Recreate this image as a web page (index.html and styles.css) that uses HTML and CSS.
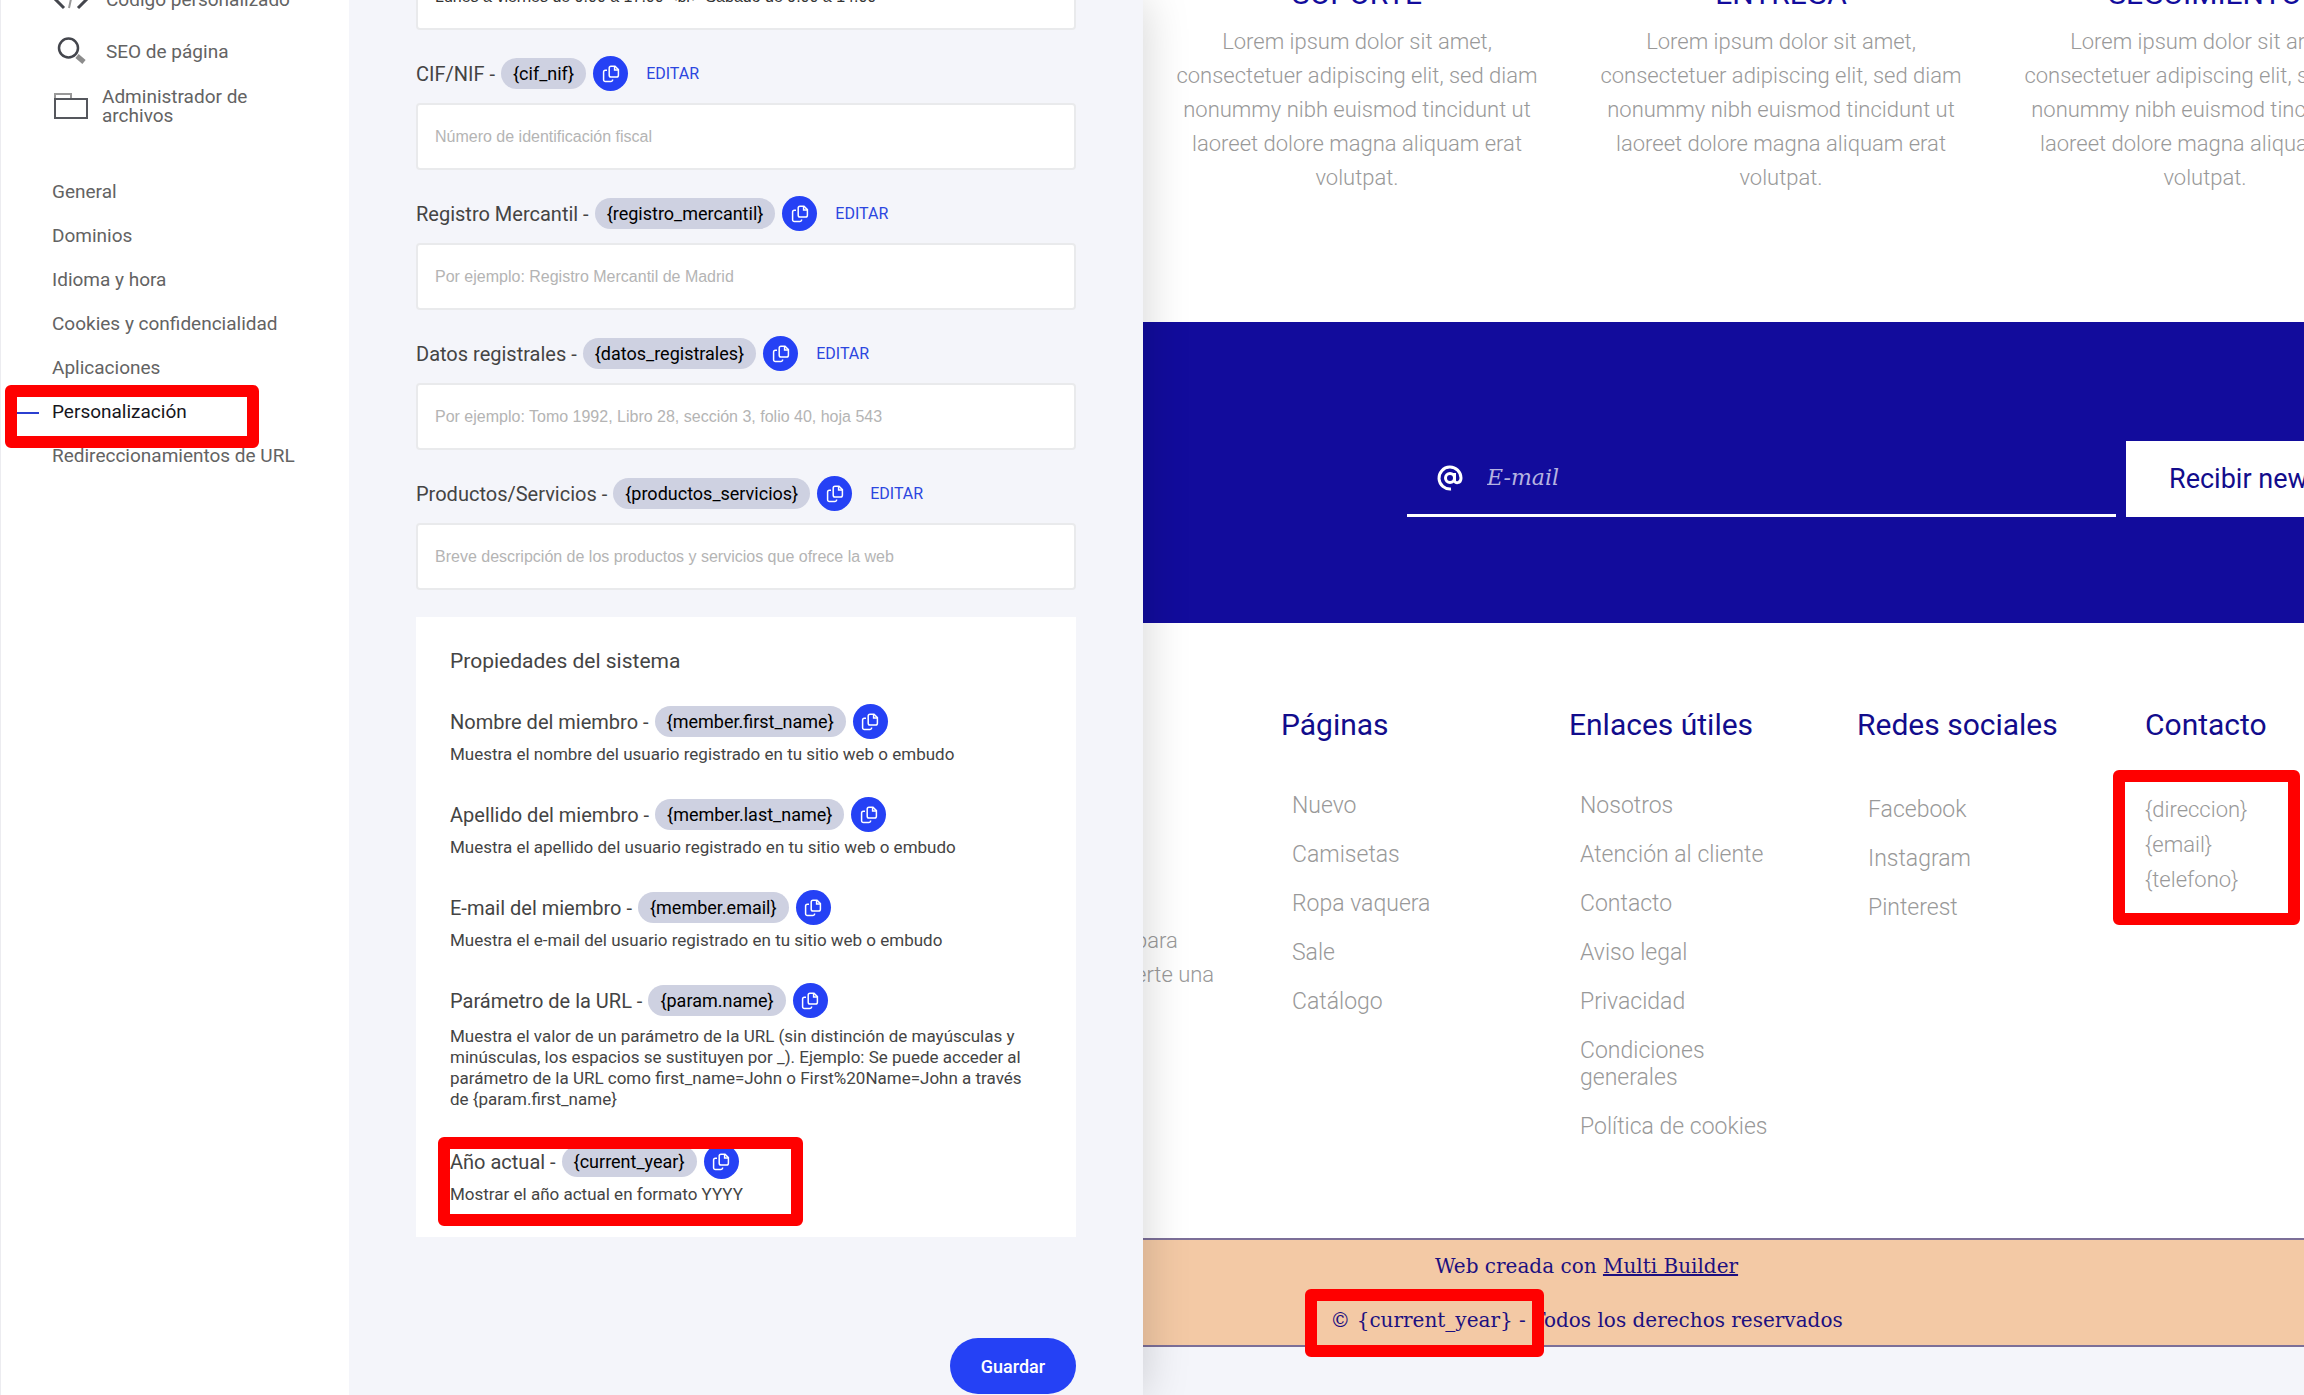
FILE: index.html
```html
<!DOCTYPE html>
<html lang="es">
<head>
  <meta charset="UTF-8" />
  <title>Personalización - Multi Builder</title>
  <link rel="stylesheet" href="styles.css">
</head>
<body>
  <svg class="sprite" aria-hidden="true">
    <symbol id="icon-copy" viewBox="0 0 18 18">
      <path d="M9 1.2h4l3.4 3.4v5.6a1.8 1.8 0 0 1-1.8 1.8H9a1.8 1.8 0 0 1-1.8-1.8V3A1.8 1.8 0 0 1 9 1.2z" />
      <path d="M12.6 1.4v3.6h3.6" />
      <path d="M5 5.2H3.4A1.8 1.8 0 0 0 1.6 7v7.8a1.8 1.8 0 0 0 1.8 1.8h5.4a1.8 1.8 0 0 0 1.8-1.8v-.4" />
    </symbol>
  </svg>

  <div class="app">
    <aside class="sidebar">
      <ul class="tools">
        <li><a href="#">
          <span class="tool-icon"><svg width="36" height="24" viewBox="0 0 36 24" fill="none" stroke-width="3"><path d="M11 3L2 12l9 9M25 3l9 9-9 9" stroke="#44464d" /><path d="M20 3l-4 18" stroke="#999" stroke-width="2" /></svg></span>
          Código personalizado
        </a></li>
        <li><a href="#">
          <span class="tool-icon"><svg width="30" height="28" viewBox="0 0 30 28" fill="none"><circle cx="12.5" cy="11" r="9.5" stroke="#44464d" stroke-width="2.5" /><path d="M21 19l7 6" stroke="#8c8c8c" stroke-width="5" /></svg></span>
          SEO de página
        </a></li>
        <li><a href="#" class="two-lines">
          <span class="tool-icon"><svg width="34" height="28" viewBox="0 0 34 28" fill="none" stroke-width="2"><path d="M1 7V2h16v5" stroke="#999" /><rect x="1" y="7" width="32" height="19" stroke="#55575d" /></svg></span>
          Administrador de archivos
        </a></li>
      </ul>
      <nav class="settings-nav">
        <a href="#">General</a>
        <a href="#">Dominios</a>
        <a href="#">Idioma y hora</a>
        <a href="#">Cookies y confidencialidad</a>
        <a href="#">Aplicaciones</a>
        <a href="#" class="active">Personalización<span class="mark mark-nav"></span></a>
        <a href="#">Redireccionamientos de URL</a>
      </nav>
    </aside>

    <main class="panel">
      <form class="panel-content">
        <input class="field-input" type="text" aria-label="Horario" value="Lunes a viernes de 9:00 a 17:00 &lt;br&gt; Sábado de 9:00 a 14:00" />

        <div class="field-head">
          <label for="cif">CIF/NIF -</label>
          <span class="tag">{cif_nif}</span>
          <button type="button" class="copy-btn" aria-label="Copiar"><svg><use href="#icon-copy" /></svg></button>
          <a href="#" class="edit">EDITAR</a>
        </div>
        <input class="field-input" type="text" id="cif" placeholder="Número de identificación fiscal" />

        <div class="field-head">
          <label for="registro">Registro Mercantil -</label>
          <span class="tag">{registro_mercantil}</span>
          <button type="button" class="copy-btn" aria-label="Copiar"><svg><use href="#icon-copy" /></svg></button>
          <a href="#" class="edit">EDITAR</a>
        </div>
        <input class="field-input" type="text" id="registro" placeholder="Por ejemplo: Registro Mercantil de Madrid" />

        <div class="field-head">
          <label for="datos">Datos registrales -</label>
          <span class="tag">{datos_registrales}</span>
          <button type="button" class="copy-btn" aria-label="Copiar"><svg><use href="#icon-copy" /></svg></button>
          <a href="#" class="edit">EDITAR</a>
        </div>
        <input class="field-input" type="text" id="datos" placeholder="Por ejemplo: Tomo 1992, Libro 28, sección 3, folio 40, hoja 543" />

        <div class="field-head">
          <label for="productos">Productos/Servicios -</label>
          <span class="tag">{productos_servicios}</span>
          <button type="button" class="copy-btn" aria-label="Copiar"><svg><use href="#icon-copy" /></svg></button>
          <a href="#" class="edit">EDITAR</a>
        </div>
        <input class="field-input" type="text" id="productos" placeholder="Breve descripción de los productos y servicios que ofrece la web" />

        <section class="card">
          <h2>Propiedades del sistema</h2>
          <div class="property">
            <div class="property-head">
              <span>Nombre del miembro -</span>
              <span class="tag">{member.first_name}</span>
              <button type="button" class="copy-btn" aria-label="Copiar"><svg><use href="#icon-copy" /></svg></button>
            </div>
            <p>Muestra el nombre del usuario registrado en tu sitio web o embudo</p>
          </div>
          <div class="property">
            <div class="property-head">
              <span>Apellido del miembro -</span>
              <span class="tag">{member.last_name}</span>
              <button type="button" class="copy-btn" aria-label="Copiar"><svg><use href="#icon-copy" /></svg></button>
            </div>
            <p>Muestra el apellido del usuario registrado en tu sitio web o embudo</p>
          </div>
          <div class="property">
            <div class="property-head">
              <span>E-mail del miembro -</span>
              <span class="tag">{member.email}</span>
              <button type="button" class="copy-btn" aria-label="Copiar"><svg><use href="#icon-copy" /></svg></button>
            </div>
            <p>Muestra el e-mail del usuario registrado en tu sitio web o embudo</p>
          </div>
          <div class="property">
            <div class="property-head">
              <span>Parámetro de la URL -</span>
              <span class="tag">{param.name}</span>
              <button type="button" class="copy-btn" aria-label="Copiar"><svg><use href="#icon-copy" /></svg></button>
            </div>
            <p class="long">Muestra el valor de un parámetro de la URL (sin distinción de mayúsculas y minúsculas, los espacios se sustituyen por _). Ejemplo: Se puede acceder al parámetro de la URL como first_name=John o First%20Name=John a través de {param.first_name}</p>
          </div>
          <div class="property">
            <div class="property-head">
              <span>Año actual -</span>
              <span class="tag">{current_year}</span>
              <button type="button" class="copy-btn" aria-label="Copiar"><svg><use href="#icon-copy" /></svg></button>
            </div>
            <p>Mostrar el año actual en formato YYYY</p>
            <span class="mark mark-year"></span>
          </div>
        </section>

        <button type="submit" class="save-btn">Guardar</button>
      </form>
    </main>

    <div class="preview">
      <section class="features">
        <div class="feature">
          <h3>SOPORTE</h3>
          <p>Lorem ipsum dolor sit amet, consectetuer adipiscing elit, sed diam nonummy nibh euismod tincidunt ut laoreet dolore magna aliquam erat volutpat.</p>
        </div>
        <div class="feature">
          <h3>ENTREGA</h3>
          <p>Lorem ipsum dolor sit amet, consectetuer adipiscing elit, sed diam nonummy nibh euismod tincidunt ut laoreet dolore magna aliquam erat volutpat.</p>
        </div>
        <div class="feature">
          <h3>SEGUIMIENTO</h3>
          <p>Lorem ipsum dolor sit amet, consectetuer adipiscing elit, sed diam nonummy nibh euismod tincidunt ut laoreet dolore magna aliquam erat volutpat.</p>
        </div>
      </section>

      <form class="newsletter">
        <div class="email-box">
          <svg width="26" height="26" viewBox="0 0 26 26" fill="none" stroke="#fff" stroke-width="3"><circle cx="13" cy="13" r="4.5" /><path d="M17.5 8v7.5c0 3 6.5 3.5 6.5-2.5A11 11 0 1 0 14 24" /></svg>
          <input type="email" placeholder="E-mail" aria-label="E-mail" />
        </div>
        <button type="button" class="newsletter-btn">Recibir newsletter</button>
      </form>

      <footer class="site-footer">
        <p class="about">para<br>erte una</p>
        <div class="footer-col">
          <h4>Páginas</h4>
          <ul>
            <li><a href="#">Nuevo</a></li>
            <li><a href="#">Camisetas</a></li>
            <li><a href="#">Ropa vaquera</a></li>
            <li><a href="#">Sale</a></li>
            <li><a href="#">Catálogo</a></li>
          </ul>
        </div>
        <div class="footer-col">
          <h4>Enlaces útiles</h4>
          <ul>
            <li><a href="#">Nosotros</a></li>
            <li><a href="#">Atención al cliente</a></li>
            <li><a href="#">Contacto</a></li>
            <li><a href="#">Aviso legal</a></li>
            <li><a href="#">Privacidad</a></li>
            <li><a href="#">Condiciones generales</a></li>
            <li><a href="#">Política de cookies</a></li>
          </ul>
        </div>
        <div class="footer-col">
          <h4>Redes sociales</h4>
          <ul class="social">
            <li><a href="#">Facebook</a></li>
            <li><a href="#">Instagram</a></li>
            <li><a href="#">Pinterest</a></li>
          </ul>
        </div>
        <div class="footer-col">
          <h4>Contacto</h4>
          <p class="contact">{direccion}<br>{email}<br>{telefono}</p>
          <span class="mark mark-contact"></span>
        </div>
      </footer>

      <div class="copyright">
        <p>Web creada con <a href="#">Multi Builder</a></p>
        <p><span class="year">© {current_year} -<span class="mark mark-copy"></span></span> Todos los derechos reservados</p>
      </div>
    </div>
  </div>
</body>
</html>
```
FILE: styles.css
```css
* {
  box-sizing: border-box;
}
body {
  margin: 0;
  background: #f4f5fa;
  color: #444;
  font-family: Roboto, sans-serif;
  font-size: 19px;
}
ul, p, h2, h3, h4 {
  margin: 0;
  padding: 0;
  list-style: none;
  font-weight: 400;
}
a {
  color: inherit;
  text-decoration: none;
}
button {
  font-family: inherit;
  border: none;
  cursor: pointer;
}
.sprite {
  display: none;
}
.app {
  display: flex;
  height: 100vh;
  overflow: hidden;
}

/* red highlight frames */
.mark {
  position: absolute;
  border: 12px solid #f00;
  border-radius: 6px;
  pointer-events: none;
  z-index: 3;
}
.mark-nav {
  left: 4px;
  top: -5px;
  width: 254px;
  height: 63px;
}
.mark-year {
  left: -12px;
  top: -7px;
  width: 365px;
  height: 89px;
}
.mark-contact {
  left: -32px;
  top: 63px;
  width: 187px;
  height: 155px;
}
.mark-copy {
  left: -25px;
  right: -18px;
  top: -14px;
  height: 68px;
}

/* sidebar */
.sidebar {
  flex: none;
  width: 349px;
  background: #fff;
  border-left: 1px solid #ececf0;
  color: #636363;
  position: relative;
  z-index: 2;
}
.tools {
  display: flex;
  flex-direction: column;
  gap: 28px;
  margin-top: -13px;
  padding-left: 51px;
}
.tools a {
  display: flex;
  align-items: center;
  width: 230px;
  height: 24px;
  gap: 16px;
  white-space: nowrap;
}
.tools .two-lines {
  height: 30px;
  gap: 12px;
  line-height: 19px;
  white-space: normal;
}
.tool-icon {
  display: flex;
  flex: none;
  justify-content: center;
  width: 38px;
}
.settings-nav {
  margin-top: 49px;
}
.settings-nav a {
  display: block;
  position: relative;
  padding-left: 51px;
  line-height: 44px;
}
.settings-nav .active {
  color: #16161d;
}
.settings-nav .active::before {
  content: "";
  position: absolute;
  left: 16px;
  top: 22px;
  width: 22px;
  height: 2px;
  background: #2b3fd0;
}

/* settings panel */
.panel {
  flex: none;
  width: 794px;
  background: #f4f5fa;
  box-shadow: 0 0 44px rgba(0, 0, 0, 0.18);
  position: relative;
  z-index: 1;
}
.panel-content {
  display: flex;
  flex-direction: column;
  margin-top: -37px;
  padding: 0 67px;
}
.field-input {
  width: 100%;
  height: 67px;
  padding: 0 17px;
  border: 2px solid #e9eaec;
  border-radius: 4px;
  background: #fff;
  color: #333;
  font-family: "Liberation Sans", sans-serif;
  font-size: 16px;
}
.field-input::placeholder {
  color: #b4b4b4;
}
.field-head, .property-head {
  display: flex;
  align-items: center;
  height: 35px;
  font-size: 20px;
}
.field-head {
  margin: 26px 0 12px;
}
.tag {
  margin: 0 7px 0 6px;
  padding: 0 12px;
  border-radius: 16px;
  background: #ced1e1;
  color: #000;
  font-size: 18px;
  line-height: 31px;
}
.copy-btn {
  display: flex;
  align-items: center;
  justify-content: center;
  width: 35px;
  height: 35px;
  padding: 0;
  border-radius: 50%;
  background: #2541f5;
}
.copy-btn svg {
  width: 18px;
  height: 18px;
  fill: none;
  stroke: #fff;
  stroke-width: 1.5;
}
.edit {
  margin-left: 18px;
  color: #2b46e0;
  font-size: 16px;
}
.card {
  display: flex;
  flex-direction: column;
  gap: 31px;
  margin-top: 27px;
  padding: 32px 34px 31px;
  background: #fff;
}
.card h2 {
  font-size: 21px;
  line-height: 24px;
}
.property {
  position: relative;
}
.property p {
  margin-top: 5px;
  font-size: 17px;
  line-height: 21px;
  padding-bottom: 1px;
}
.property .long {
  padding: 3px 0;
}
.save-btn {
  align-self: flex-end;
  width: 126px;
  height: 56px;
  margin-top: 101px;
  border-radius: 28px;
  background: #2541f5;
  color: #fff;
  font-size: 18px;
  font-weight: 500;
}

/* site preview, its left part slides under the panel */
.preview {
  flex: 1;
  min-width: 0;
  margin-left: -274px;
  overflow: hidden;
  color: #999;
  font-family: "Roboto Light", Roboto, sans-serif;
  font-size: 22px;
  font-weight: 300;
}
.features {
  display: flex;
  gap: 44px;
  height: 322px;
  padding-left: 298px;
  background: #fff;
}
.feature {
  flex: none;
  width: 380px;
  margin-top: -19px;
  text-align: center;
  line-height: 34px;
}
.feature h3 {
  margin-bottom: 18px;
  color: #120c9c;
  font-family: Roboto, sans-serif;
  font-size: 30px;
  line-height: 26px;
}
.newsletter {
  display: flex;
  align-items: center;
  gap: 10px;
  height: 301px;
  padding: 13px 0 0 538px;
  background: #120c9c;
}
.email-box {
  display: flex;
  flex: none;
  align-items: center;
  gap: 24px;
  width: 709px;
  height: 76px;
  padding-left: 30px;
  border-bottom: 3px solid #fff;
}
.email-box input {
  flex: 1;
  padding: 0;
  border: none;
  outline: none;
  background: none;
  color: #fff;
  font: italic 22px "DejaVu Serif", serif;
}
.email-box input::placeholder {
  color: #b5b3e0;
}
.newsletter-btn {
  flex: none;
  height: 76px;
  padding: 0 43px;
  background: #fff;
  color: #120c8c;
  font-family: Roboto, sans-serif;
  font-size: 27px;
  white-space: nowrap;
}
.site-footer {
  display: grid;
  grid-template-columns: repeat(5, 288px);
  min-height: 615px;
  padding: 84px 0 0 124px;
  background: #fff;
}
.about {
  padding: 217px 0 0 142px;
  line-height: 34px;
}
.footer-col {
  position: relative;
}
.footer-col h4 {
  color: #120c8c;
  font-family: Roboto, sans-serif;
  font-size: 30px;
  line-height: 36px;
}
.footer-col ul {
  display: flex;
  flex-direction: column;
  gap: 22px;
  width: 206px;
  padding: 49px 0 0 11px;
  font-size: 23px;
  line-height: 27px;
}
.footer-col .social {
  padding-top: 53px;
}
.contact {
  padding-top: 49px;
  line-height: 35px;
}
.copyright {
  display: flex;
  flex-direction: column;
  gap: 20px;
  padding: 9px 0 8px;
  border-top: 2px solid #7c6f98;
  border-bottom: 2px solid #7c6f98;
  background: #f3c9a5;
  color: #1c1080;
  font-family: "DejaVu Serif", serif;
  font-size: 20px;
  font-weight: 400;
  line-height: 34px;
  text-align: center;
}
.copyright a {
  text-decoration: underline;
}
.year {
  display: inline-block;
  position: relative;
}
```
